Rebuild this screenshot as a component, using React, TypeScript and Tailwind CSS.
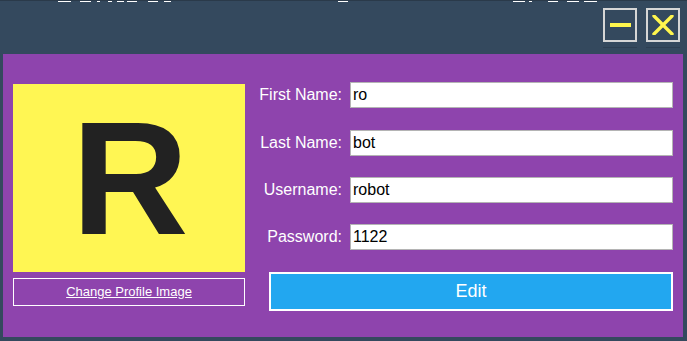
import React from "react";

const frags: [number, number][] = [
  [58, 13], [9, 11], [6, 3], [8, 4], [5, 7], [3, 10], [11, 10], [6, 7],
  [167, 10], [165, 12], [4, 3], [16, 10], [9, 12], [5, 13],
];

function Row({ label, value }: { label: string; value: string }) {
  return (
    <div className="flex items-center h-[26px]">
      <div className="w-[87px] text-right text-white text-[16px] leading-none">{label}</div>
      <div className="ml-[8px] w-[323px] h-[26px] bg-white border border-[#b4b4b4] flex items-center pl-[2px] text-black text-[16px]">
        {value}
      </div>
    </div>
  );
}

export default function App() {
  return (
    <div
      className="w-[687px] h-[341px] bg-[#34495e] overflow-hidden flex flex-col"
      style={{ fontFamily: '"Liberation Sans", Arial, sans-serif' }}
    >
      <div className="h-[2px] flex border-t border-[#2a3a4a]">
        {frags.map(([ml, w], i) => (
          <div key={i} className="h-[1px] bg-white" style={{ marginLeft: ml, width: w }} />
        ))}
      </div>
      <div className="flex justify-end gap-[9px] pr-[7px] pt-[6px] h-[52px]">
        <div className="flex flex-col">
          <div className="w-[34px] h-[34px] border-2 border-[#d6d6d6] flex items-center justify-center">
            <div className="w-[21px] h-[4px] bg-[#fff64d]" />
          </div>
          <div className="mt-[5px] h-[1px] bg-[#2d3f52]" />
        </div>
        <div className="flex flex-col">
          <div className="w-[34px] h-[34px] border-2 border-[#d6d6d6] flex items-center justify-center">
            <svg width="22" height="20" viewBox="0 0 22 20">
              <path d="M2 1 L20 19 M20 1 L2 19" stroke="#fff64d" strokeWidth="3.4" strokeLinecap="round" />
            </svg>
          </div>
          <div className="mt-[5px] h-[1px] bg-[#2d3f52]" />
        </div>
      </div>
      <div className="ml-[3px] w-[680px] h-[283px] bg-[#8e44ad] flex">
        <div className="ml-[10px] pt-[30px] flex flex-col w-[232px]">
          <div className="h-[188px] bg-[#fff653] flex items-center justify-center">
            <span className="text-[#222222] font-bold text-[162px] leading-none ml-[2px]">R</span>
          </div>
          <div className="mt-[6px] h-[28px] border border-white flex items-center justify-center text-white text-[13px] underline">
            Change Profile Image
          </div>
        </div>
        <div className="ml-[10px] flex flex-col">
          <div className="pt-[28px]">
            <Row label="First Name:" value="ro" />
          </div>
          <div className="mt-[22px]">
            <Row label="Last Name:" value="bot" />
          </div>
          <div className="mt-[21px]">
            <Row label="Username:" value="robot" />
          </div>
          <div className="mt-[21px]">
            <Row label="Password:" value="1122" />
          </div>
          <div className="mt-[22px] ml-[14px] w-[404px] h-[39px] bg-[#22a7f0] border-2 border-white flex items-center justify-center text-white text-[18px]">
            Edit
          </div>
        </div>
      </div>
    </div>
  );
}
